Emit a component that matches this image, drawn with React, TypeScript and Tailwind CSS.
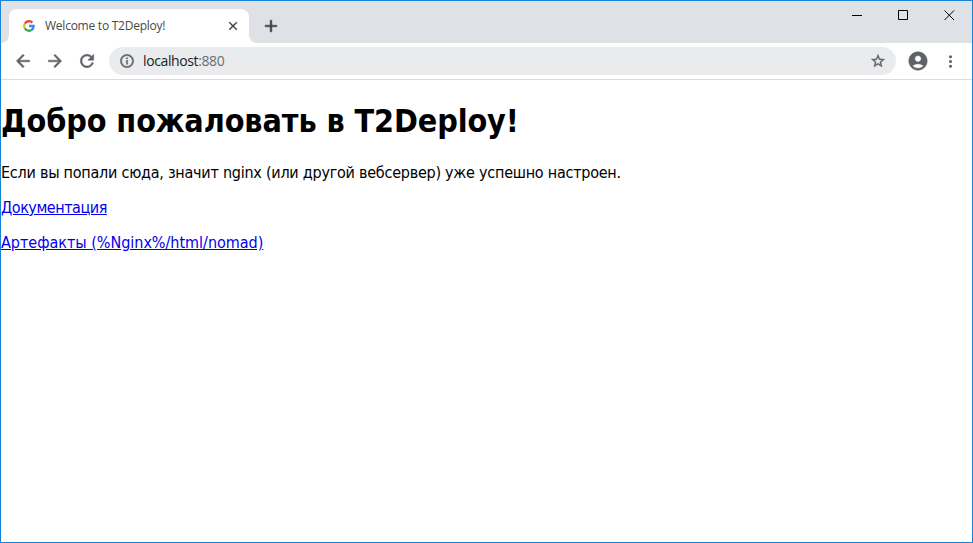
import React from "react";
import { MdArrowBack, MdArrowForward, MdRefresh, MdInfoOutline, MdStarBorder, MdAccountCircle, MdMoreVert, MdClose, MdAdd } from "react-icons/md";

function GoogleMark() {
  return (
    <svg width="12" height="12" viewBox="0 0 24 24" fill="none" strokeWidth="4.6">
      <path d="M3.6 7.4A9.6 9.6 0 0 1 18.8 5.2" stroke="#ea4335" />
      <path d="M3.6 7.4A9.7 9.7 0 0 0 3.6 16.6" stroke="#fbbc05" />
      <path d="M3.6 16.6A9.6 9.6 0 0 0 18.4 19" stroke="#34a853" />
      <path d="M12 12H21.3A9.6 9.6 0 0 1 17.6 19.6" stroke="#4285f4" />
    </svg>
  );
}

// The first path of every Material icon is its empty bounding box.
const bold = "shrink-0 [stroke-width:0.6] [&>path:first-child]:stroke-none";

function TabStrip() {
  return (
    <div className="flex h-[42px] shrink-0 bg-[#dee1e6]">
      <div className="flex items-end pt-2">
        <svg width="8" height="8" className="block"><path d="M8 0V8H0A8 8 0 0 0 8 0Z" fill="#fff" /></svg>
        <div className="flex h-[34px] w-60 items-center rounded-t-lg bg-white pl-[14px] pr-[9px]">
          <GoogleMark />
          <span className="ml-[10px] flex-1 whitespace-nowrap text-[12px] tracking-[-0.24px] text-[#45494d]">Welcome to T2Deploy!</span>
          <MdClose size={14} color="#3c4043" className={bold} />
        </div>
        <svg width="8" height="8" className="block"><path d="M0 0V8H8A8 8 0 0 1 0 0Z" fill="#fff" /></svg>
      </div>
      <div className="ml-1 flex h-full w-5 items-center pt-2">
        <MdAdd size={20} color="#3c4043" className={bold} />
      </div>
      <div className="ml-auto flex h-7">
        {["M0 5.5H10", "M.5 .5H9.5V9.5H.5Z", "M.5 .5L10 10M10 .5L.5 10"].map((d) => (
          <div key={d} className="flex w-[46px] items-center justify-center">
            <svg width="11" height="11" fill="none" stroke="#000" strokeWidth="1"><path d={d} /></svg>
          </div>
        ))}
      </div>
    </div>
  );
}

function Toolbar() {
  return (
    <div className="flex h-[37px] shrink-0 items-center border-b border-[#dadce0] text-[#5f6368]">
      <div className="flex w-[108px] gap-3 pl-3">
        <MdArrowBack size={20} className={bold} />
        <MdArrowForward size={20} className={bold} />
        <MdRefresh size={20} className={bold} />
      </div>
      <div className="flex h-7 w-[787px] items-center rounded-full bg-[#e9ebed] px-[10px]">
        <MdInfoOutline size={16} className={bold} />
        <span className="ml-2 flex-1 pb-px text-[14px] leading-[19px] tracking-[-0.39px] text-[#6b6f74]"><span className="text-[#202124]">localhost</span>:880</span>
        <MdStarBorder size={16} className={bold} />
      </div>
      <MdAccountCircle size={22} className={`ml-[11px] ${bold}`} />
      <MdMoreVert size={19} className="ml-3 mt-px" />
    </div>
  );
}

export default function App() {
  return (
    <div className="flex h-[543px] w-[973px] flex-col overflow-hidden border border-[#1883d7] bg-white font-['Open_Sans','Noto_Sans',sans-serif]">
      <TabStrip />
      <Toolbar />
      <main className="text-[16px] leading-[19px] tracking-[-0.245px] text-black font-['DejaVu_Sans_Condensed','DejaVu_Sans',sans-serif]">
        <h1 className="mt-[22px] whitespace-nowrap text-[32px] font-bold leading-[39px] tracking-[-0.1px]">Добро пожаловать в T2Deploy!</h1>
        <p className="mt-[22px] whitespace-nowrap">Если вы попали сюда, значит nginx (или другой вебсервер) уже успешно настроен.</p>
        <p className="mt-4 tracking-[-0.46px]"><a href="#docs" className="text-[#0000ee] underline">Документация</a></p>
        <p className="mt-4 tracking-[-0.02px]"><a href="#nomad" className="text-[#0000ee] underline">Артефакты (%Nginx%/html/nomad)</a></p>
      </main>
    </div>
  );
}
